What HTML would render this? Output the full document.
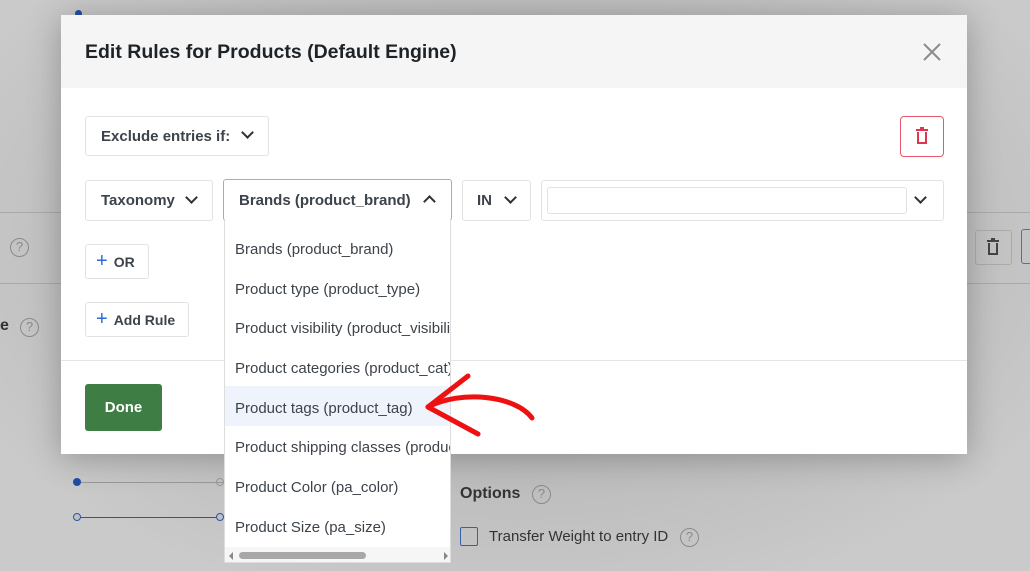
<!DOCTYPE html>
<html><head><meta charset="utf-8"><style>
*{box-sizing:border-box;margin:0;padding:0}
body{width:1030px;height:571px;overflow:hidden;position:relative;font-family:"Liberation Sans",sans-serif;background:radial-gradient(ellipse 620px 380px at 515px 240px,#a9a9ab 0%,#bcbcbd 60%,#cacaca 100%);color:#2c3338}
.abs{position:absolute}
.box{position:absolute;border:1px solid #e2e2e2;border-radius:3px;background:#fff;font-weight:bold;font-size:15px;color:#3c434a;display:flex;align-items:center}
.chev{display:inline-block;width:9px;height:9px;border-right:2px solid #2c3338;border-bottom:2px solid #2c3338;transform:rotate(45deg);position:absolute}
.item{position:absolute;left:10px;font-size:15px;color:#3c434a;white-space:nowrap}
.q{position:absolute;width:19px;height:19px;border:1.5px solid #8a8a8a;border-radius:50%;font-size:13px;color:#8a8a8a;text-align:center;line-height:16px}
</style></head><body>
<div class="abs" style="left:0;top:212px;width:1030px;height:1px;background:#a9a9a9"></div>
<div class="abs" style="left:0;top:283px;width:1030px;height:1px;background:#a9a9a9"></div>
<div class="q" style="left:10px;top:238px">?</div>
<div class="abs" style="left:0;top:317px;font-size:16px;font-weight:bold;color:#333">e</div>
<div class="q" style="left:20px;top:318px">?</div>
<div class="abs" style="left:975px;top:230px;width:37px;height:35px;border:1px solid #aaa;border-radius:3px"></div>
<svg class="abs" style="left:986px;top:238px" width="14" height="18" viewBox="0 0 14 18"><path d="M1 3h12M5 1h4M3 5v11h8V5" stroke="#444" stroke-width="2" fill="none"/></svg>
<div class="abs" style="left:1021px;top:229px;width:20px;height:35px;border:1.5px solid #4a6fb5;border-radius:3px"></div>
<div class="abs" style="left:75px;top:482px;width:150px;height:1px;background:#999"></div>
<div class="abs" style="left:73px;top:478px;width:8px;height:8px;border-radius:50%;background:#1e4fa8"></div>
<div class="abs" style="left:216px;top:478px;width:8px;height:8px;border-radius:50%;border:1px solid #999"></div>
<div class="abs" style="left:77px;top:517px;width:145px;height:1px;background:#2d55a5"></div>
<div class="abs" style="left:73px;top:513px;width:8px;height:8px;border-radius:50%;border:1.5px solid #2d55a5;background:#c0c0c0"></div>
<div class="abs" style="left:216px;top:513px;width:8px;height:8px;border-radius:50%;border:1.5px solid #2d55a5;background:#c0c0c0"></div>
<div class="abs" style="left:75px;top:10px;width:7px;height:7px;border-radius:50%;background:#1e4fa8"></div>
<div class="abs" style="left:460px;top:485px;font-size:16px;font-weight:bold;color:#333">Options</div>
<div class="q" style="left:532px;top:485px">?</div>
<div class="abs" style="left:460px;top:527px;width:18px;height:19px;border:1.5px solid #3a5fa8;border-radius:2px"></div>
<div class="abs" style="left:489px;top:528px;font-size:15px;color:#333">Transfer Weight to entry ID</div>
<div class="q" style="left:680px;top:528px">?</div>

<div class="abs" style="left:61px;top:15px;width:906px;height:439px;background:#fff;box-shadow:0 4px 30px rgba(0,0,0,.25)">
  <div class="abs" style="left:0;top:0;width:906px;height:73px;background:#f5f5f5"></div>
  <div class="abs" style="left:24px;top:26px;font-size:19.5px;font-weight:bold;color:#1d2327">Edit Rules for Products (Default Engine)</div>
  <svg class="abs" style="left:861px;top:27px" width="20" height="20" viewBox="0 0 20 20"><path d="M2 2L18 18M18 2L2 18" stroke="#8c8c8c" stroke-width="2"/></svg>
  <div class="abs" style="left:0;top:345px;width:906px;height:1px;background:#e5e5e5"></div>
</div>
<div class="box" style="left:85px;top:116px;width:184px;height:40px;padding-left:15px">Exclude entries if:<span class="chev" style="left:157px;top:11px"></span></div>
<div class="abs" style="left:900px;top:116px;width:44px;height:41px;border:1.5px solid #e8576c;border-radius:4px"></div>
<svg class="abs" style="left:914px;top:127px" width="16" height="18" viewBox="0 0 16 18"><path d="M2 3h12M6 1h4M4 5v11h8V5" stroke="#e0354f" stroke-width="2" fill="none"/></svg>
<div class="box" style="left:85px;top:180px;width:128px;height:41px;padding-left:15px">Taxonomy<span class="chev" style="left:101px;top:12px"></span></div>
<div class="box" style="left:223px;top:179px;width:229px;height:42px;padding-left:15px;border:1.5px solid #8fb0e6">Brands (product_brand)<span class="chev" style="left:201px;top:17px;transform:rotate(225deg)"></span></div>
<div class="box" style="left:462px;top:180px;width:69px;height:41px;padding-left:14px">IN<span class="chev" style="left:43px;top:12px"></span></div>
<div class="box" style="left:541px;top:180px;width:403px;height:41px"></div>
<div class="abs" style="left:547px;top:187px;width:360px;height:27px;border:1px solid #e2e2e2;border-radius:3px"></div>
<span class="chev" style="left:916px;top:193px"></span>
<div class="box" style="left:85px;top:244px;width:64px;height:35px;padding-left:10px;font-size:14px"><span style="color:#2c6cd6;font-size:20px;margin-right:6px;font-weight:normal">+</span>OR</div>
<div class="box" style="left:85px;top:302px;width:104px;height:35px;padding-left:10px;font-size:14px"><span style="color:#2c6cd6;font-size:20px;margin-right:6px;font-weight:normal">+</span>Add Rule</div>
<div class="abs" style="left:85px;top:384px;width:77px;height:47px;background:#3e7e45;border-radius:3px;color:#fff;font-weight:bold;font-size:15px;text-align:center;line-height:47px">Done</div>

<div class="abs" style="left:224px;top:220px;width:227px;height:343px;background:#fff;border:1px solid #ddd;border-top:none;overflow:hidden">
  <div class="abs" style="left:0;top:166px;width:227px;height:40px;background:#eef3fc"></div>
  <div class="item" style="top:21px">Brands (product_brand)</div>
  <div class="item" style="top:61px">Product type (product_type)</div>
  <div class="item" style="top:100px">Product visibility (product_visibility)</div>
  <div class="item" style="top:140px">Product categories (product_cat)</div>
  <div class="item" style="top:180px">Product tags (product_tag)</div>
  <div class="item" style="top:219px">Product shipping classes (product_shipping_class)</div>
  <div class="item" style="top:259px">Product Color (pa_color)</div>
  <div class="item" style="top:299px">Product Size (pa_size)</div>
  <div class="abs" style="left:0;top:327px;width:227px;height:16px;background:#f6f6f6"></div>
  <div class="abs" style="left:14px;top:332px;width:127px;height:7px;background:#a8a8a8;border-radius:4px"></div>
  <div class="abs" style="left:4px;top:332px;width:0;height:0;border:4px solid transparent;border-right-color:#888;border-left:none"></div>
  <div class="abs" style="left:219px;top:332px;width:0;height:0;border:4px solid transparent;border-left-color:#888;border-right:none"></div>
</div>
<svg class="abs" style="left:420px;top:370px" width="120" height="70" viewBox="0 0 120 70"><path d="M8 37 C40 20,95 25,112 48" stroke="#ee1111" stroke-width="5" fill="none" stroke-linecap="round"/><path d="M48 6 L8 37 L58 64" stroke="#ee1111" stroke-width="5" fill="none" stroke-linecap="round" stroke-linejoin="round"/></svg>
</body></html>
